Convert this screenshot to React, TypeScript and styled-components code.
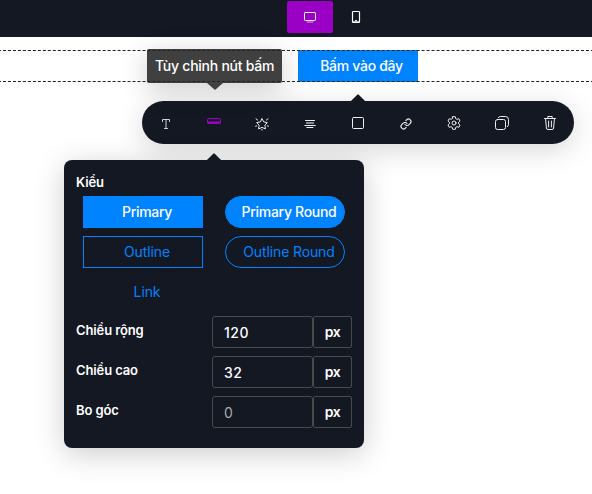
import React from "react";
import styled, { createGlobalStyle, css } from "styled-components";

const NAVY = "#141822";
const BLUE = "#0083ff";
const PURPLE = "#9b00c5";

const GlobalStyle = createGlobalStyle`
  * { box-sizing: border-box; }
  body { margin: 0; background: #fff; overflow: hidden; }
  button, input { font: inherit; margin: 0; }
`;

const Page = styled.div`
  position: relative;
  display: flex;
  flex-direction: column;
  width: 592px;
  height: 494px;
  overflow: hidden;
  font: 400 14px/20px Inter, sans-serif;
  color: #fff;
`;

const TopBar = styled.header`
  display: flex;
  justify-content: center;
  flex: none;
  height: 37px;
  padding-top: 1px;
  background: ${NAVY};
`;

const DeviceButton = styled.button<{ $active?: boolean }>`
  display: flex;
  align-items: center;
  justify-content: center;
  width: 46px;
  height: 32px;
  padding: 0;
  border: 0;
  border-radius: 2px;
  color: #fff;
  background: ${(p) => (p.$active ? PURPLE : "transparent")};
`;

const DeviceGroup = styled.div`
  display: flex;
  margin-left: 74px;
`;

const Block = styled.section`
  position: relative;
  display: flex;
  flex: none;
  height: 32px;
  margin-top: 13px;
  padding-left: 298px;
  &::after {
    content: "";
    position: absolute;
    z-index: 3;
    inset: 0 -2px;
    border: 1px dashed #222;
  }
`;

const CtaButton = styled.button`
  width: 120px;
  height: 32px;
  padding: 0 0 0 7px;
  border: 0;
  color: #fff;
  background: ${BLUE};
  letter-spacing: -0.3px;
  font-weight: 500;
`;

const arrowUp = css<{ $arrow: number }>`
  &::before {
    content: "";
    position: absolute;
    left: ${(p) => p.$arrow}px;
    top: -5px;
    width: 10px;
    height: 10px;
    border-radius: 1px 0 0 0;
    transform: rotate(45deg);
    background: ${NAVY};
  }
`;

const Tooltip = styled.div`
  position: absolute;
  z-index: 2;
  left: 147px;
  top: 49px;
  width: 135px;
  height: 34px;
  padding: 7px 8px;
  border-radius: 2px;
  background: #404040;
  box-shadow: 0 6px 28px rgba(0, 0, 0, 0.2);
  white-space: nowrap;
  letter-spacing: -0.25px;
  font-weight: 500;
  &::after {
    content: "";
    position: absolute;
    left: 59.5px;
    top: 34px;
    border: solid transparent;
    border-width: 7px 8px 0;
    border-top-color: #404040;
  }
`;

const Toolbar = styled.nav<{ $arrow: number }>`
  position: absolute;
  left: 142px;
  top: 101px;
  display: flex;
  width: 432px;
  height: 43px;
  border-radius: 22px;
  background: ${NAVY};
  box-shadow: 0 6px 28px rgba(0, 0, 0, 0.16);
  ${arrowUp}
`;

const Tool = styled.button<{ $active?: boolean }>`
  display: flex;
  align-items: flex-start;
  justify-content: center;
  width: 48px;
  height: 43px;
  padding: 15px 0 0;
  border: 0;
  background: none;
  color: ${(p) => (p.$active ? PURPLE : "#eee")};
`;

const Panel = styled.aside<{ $arrow: number }>`
  position: absolute;
  left: 64px;
  top: 160px;
  width: 300px;
  height: 288px;
  padding: 12px;
  border-radius: 8px;
  background: ${NAVY};
  box-shadow: 0 6px 30px rgba(0, 0, 0, 0.2);
  ${arrowUp}
`;

const Label = styled.div`
  font-size: 13px;
  font-weight: 600;
  letter-spacing: -0.12px;
`;

const Styles = styled.div`
  display: grid;
  grid-template-columns: 120px 120px;
  gap: 8px 22px;
  margin: 4px 0 8px 7px;
`;

const StyleOption = styled.button<{ $kind: "solid" | "outline" | "link"; $round?: boolean }>`
  height: 32px;
  padding: 0 0 0 8px;
  white-space: nowrap;
  font-weight: ${(p) => (p.$kind === "solid" ? 500 : 400)};
  letter-spacing: ${(p) => (p.$kind === "solid" ? "-0.3px" : "-0.12px")};
  color: ${(p) => (p.$kind === "solid" ? "#fff" : BLUE)};
  background: ${(p) => (p.$kind === "solid" ? BLUE : "transparent")};
  border: 1px solid ${(p) => (p.$kind === "link" ? "transparent" : BLUE)};
  border-radius: ${(p) => (p.$round ? "16px" : "0")};
`;

const Field = styled.div`
  display: flex;
  justify-content: space-between;
  height: 32px;
  margin-bottom: 8px;
  ${Label} { margin-top: 4px; }
`;

const InputGroup = styled.div`
  display: flex;
  width: 140px;
`;

const Input = styled.input`
  width: 101px;
  height: 32px;
  padding: 1px 11px 0;
  border: 1px solid #4a4a4a;
  border-radius: 3px;
  background: transparent;
  color: #fff;
  font-weight: 500;
  letter-spacing: 0.5px;
  outline: 0;
  &::placeholder { color: #aaa; opacity: 1; font-weight: 400; }
`;

const Unit = styled.span`
  width: 39px;
  height: 32px;
  padding-top: 5px;
  border: 1px solid #4a4a4a;
  border-radius: 2px;
  text-align: center;
  font-weight: 600;
  letter-spacing: -0.5px;
`;

const Glyph = styled.svg`
  display: block;
  flex: none;
  width: 16px;
  height: 16px;
  overflow: visible;
  fill: none;
  stroke: currentColor;
  stroke-linecap: round;
  stroke-linejoin: round;
`;

const Icon = ({ children }: { children: React.ReactNode }) => (
  <Glyph viewBox="0 0 16 16">{children}</Glyph>
);

const tools: { name: string; active?: boolean; art: React.ReactNode }[] = [
  { name: "text", art: <path d="M4.5 5.5v-2h7v2M8 3.5v9M6.5 12.5h3" strokeOpacity=".85" /> },
  { name: "button", active: true, art: <><rect x="1.5" y="2.5" width="13" height="5" rx="1" /><path d="M2 6.5h12" strokeWidth="2" /></> },
  { name: "effect", art: <><path d="M8 2.8 9.8 5.9l3.5.7-2.4 2.6.5 3.7L8 11.4l-3.4 1.5.5-3.7-2.4-2.6 3.5-.7z" /><path d="m2 2.8 1.6 1.2M14 2.8l-1.6 1.2M1.6 10.2l1.1-.3M14.4 10.2l-1.1-.3M8 13.4v.6" /></> },
  { name: "align", art: <><path d="M3.5 4.5h9M4.8 11.5h6.2M2.8 9.5h10.5" /><path d="M5 7h6" strokeOpacity=".55" strokeWidth="2" strokeLinecap="square" /></> },
  { name: "border", art: <rect x="2.5" y="1.5" width="11" height="11" rx="1" /> },
  { name: "link", art: <g transform="translate(2 2) scale(.5)" strokeWidth="2.2"><path d="M10 13a5 5 0 0 0 7.54.54l3-3a5 5 0 0 0-7.07-7.07l-1.72 1.71" /><path d="M14 11a5 5 0 0 0-7.54-.54l-3 3a5 5 0 0 0 7.07 7.07l1.71-1.71" /></g> },
  { name: "settings", art: <><path d="M6.7.7h2.6l.4 1.9 1.2.7 1.9-.6 1.2 2.2-1.4 1.3v1.6l1.4 1.3-1.2 2.2-1.9-.6-1.2.7-.4 1.9H6.7l-.4-1.9-1.2-.7-1.9.6L2 9.1l1.4-1.3V6.2L2 4.9l1.2-2.2 1.9.6 1.2-.7z" /><circle cx="8" cy="7" r="2" /></> },
  { name: "duplicate", art: <><rect x="1.5" y="3.5" width="10" height="10" rx="2" /><path d="M4.3 1.7Q4.8.5 6.5.5h5q3 0 3 3v5q0 1.6-1.2 2.2" /></> },
  { name: "delete", art: <path d="M2.5 2.5h11M5.8 2.3V.5h4.4v1.8M3.6 2.8l.8 9.2q.1 1.5 1.5 1.5h4.2q1.4 0 1.5-1.5l.8-9.2M6.6 5v6M9.4 5v6" /> },
];

const fields = [
  { label: "Chiều rộng", value: "120" },
  { label: "Chiều cao", value: "32" },
  { label: "Bo góc", value: "" },
];

export default function App() {
  return (
    <>
      <GlobalStyle />
      <Page>
        <TopBar>
          <DeviceGroup>
            <DeviceButton $active aria-label="Desktop">
              <Icon><rect x="2.5" y="3.5" width="11" height="8" rx=".8" /><path d="M5 13h6" strokeOpacity=".65" /></Icon>
            </DeviceButton>
            <DeviceButton aria-label="Mobile">
              <Icon><rect x="4.5" y="2.5" width="7" height="11" rx=".8" strokeWidth="1.2" /><path d="M7.5 11.5h1M5 12.8h6" /></Icon>
            </DeviceButton>
          </DeviceGroup>
        </TopBar>
        <Block><CtaButton>Bấm vào đây</CtaButton></Block>
        <Toolbar $arrow={211}>
          {tools.map((t) => (
            <Tool key={t.name} $active={t.active} aria-label={t.name}><Icon>{t.art}</Icon></Tool>
          ))}
        </Toolbar>
        <Tooltip>Tùy chỉnh nút bấm</Tooltip>
        <Panel $arrow={144.5}>
          <Label>Kiểu</Label>
          <Styles>
            <StyleOption $kind="solid">Primary</StyleOption>
            <StyleOption $kind="solid" $round>Primary Round</StyleOption>
            <StyleOption $kind="outline">Outline</StyleOption>
            <StyleOption $kind="outline" $round>Outline Round</StyleOption>
            <StyleOption $kind="link">Link</StyleOption>
          </Styles>
          {fields.map((f) => (
            <Field key={f.label}>
              <Label>{f.label}</Label>
              <InputGroup>
                <Input defaultValue={f.value} placeholder="0" aria-label={f.label} />
                <Unit>px</Unit>
              </InputGroup>
            </Field>
          ))}
        </Panel>
      </Page>
    </>
  );
}
